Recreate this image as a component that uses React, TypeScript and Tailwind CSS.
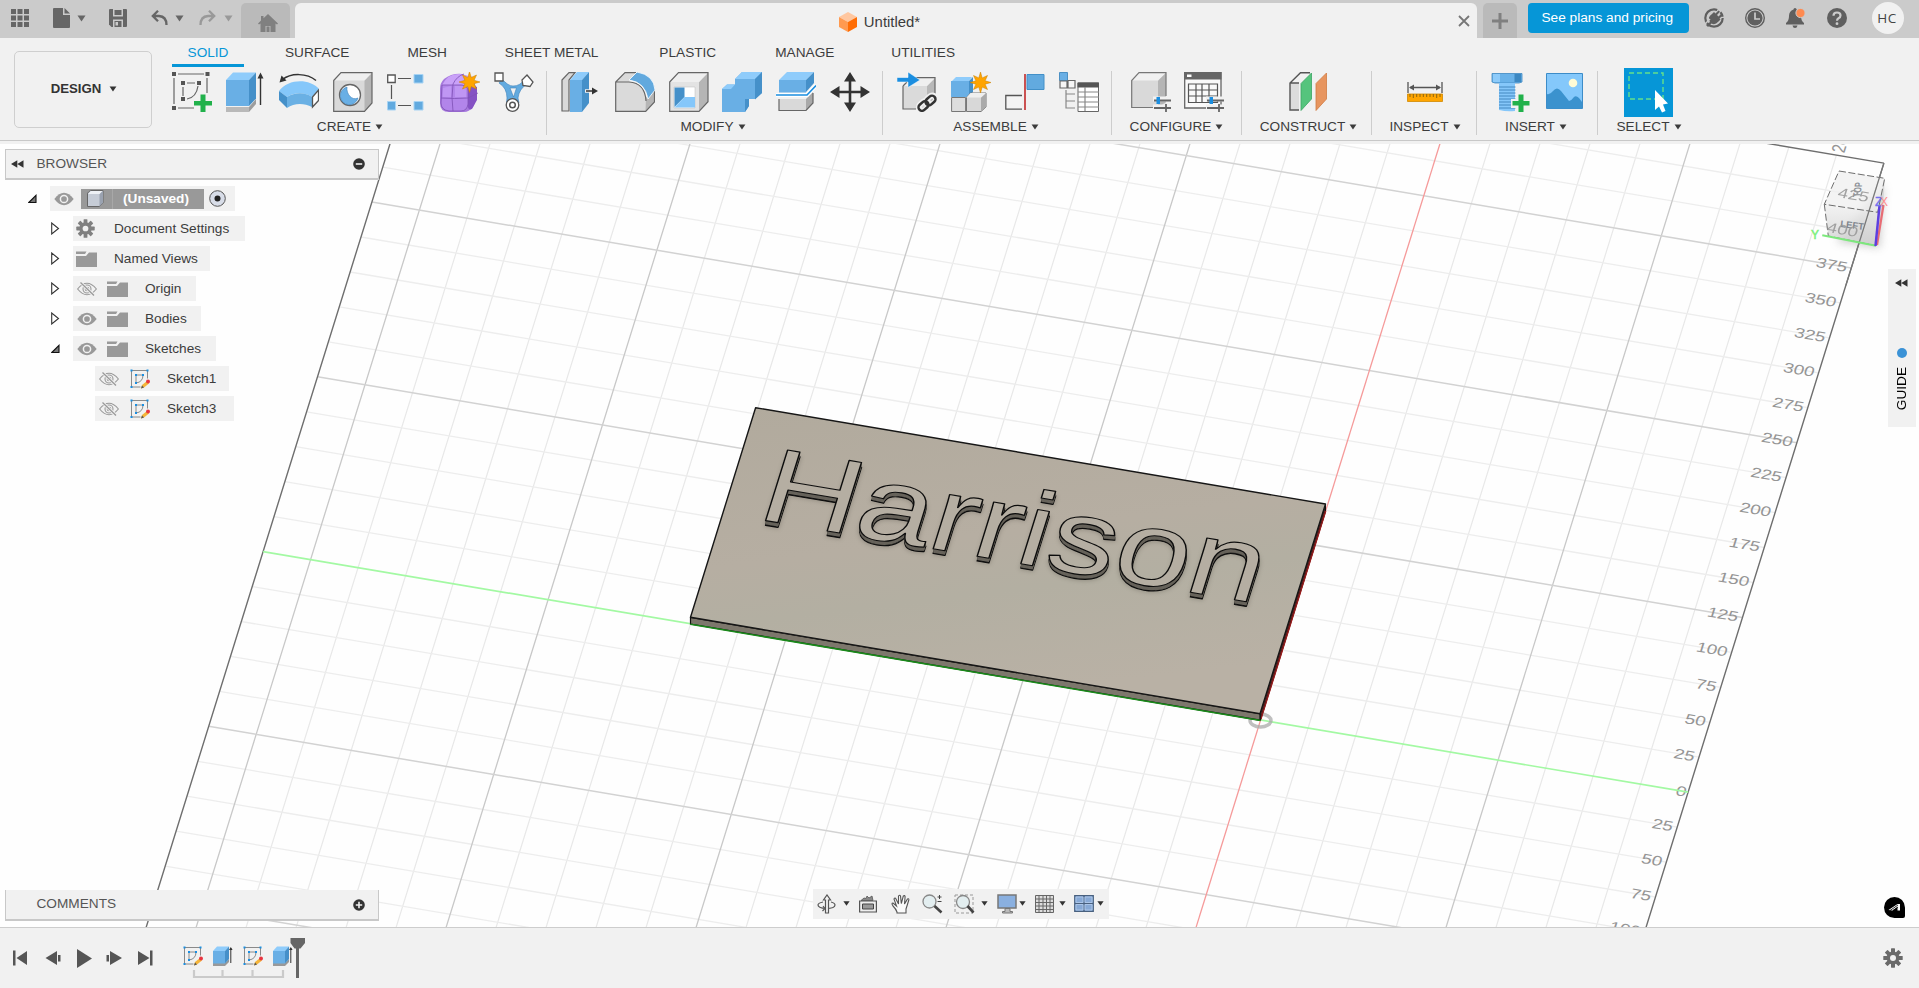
import type { ReactNode } from 'react';

type P = { children?: ReactNode; className?: string };

const Icon40 = ({ children }: P) => (
  <svg width="40" height="40" viewBox="0 0 40 40" className="block shrink-0">{children}</svg>
);

const Caret = ({ className = '' }: P) => (
  <svg width="9" height="7" viewBox="0 0 9 7" className={'block shrink-0 ' + className}>
    <path d="M0.5 0.5h8L4.5 6.5z" fill="currentColor" />
  </svg>
);

const Star = ({ x, y }: { x: number; y: number }) => (
  <path
    transform={`translate(${x} ${y})`}
    d="M0-10.5 1.700-4.600 7-7 4.600-1.700 10.5 0 4.600 1.700 7 7 1.700 4.600 0 10.5-1.700 4.600-7 7-4.600 1.700-10.5 0-4.600-1.700-7-7-1.700-4.600z"
    fill="#ffa400" stroke="#c98100" strokeWidth=".5"
  />
);

/* ---------- ribbon icons ---------- */
const SketchNew = () => (
  <Icon40>
    <g fill="none" stroke="#666" strokeWidth="1.2">
      <path d="M2 6v26M6 2h26M35 6v15M6 36h16M11 15v9M15 11h8M26 14c-1 7-5 12-11 13" />
    </g>
    <g fill="#555"><path d="M0 0h4v4H0zM33.500 0h4v4h-4zM0 34h4v4H0zM9 9h4v4H9zM25 9h4v4h-4zM9 25h4v4H9z" /></g>
    <path d="M28.500 22.500h5v6.500h6.500v4.500h-6.500v6.500h-5v-6.500H22V29h6.500z" fill="#21b14b" />
  </Icon40>
);
const Extrude = () => (
  <Icon40>
    <path d="M0 35h23l7-8v5l-7 8H0z" fill="#9d9d9d" /><path d="M0 35h23v5H0z" fill="#b9b9b9" />
    <path d="M0 8 7 0.500h23L23 8z" fill="#8fccfb" />
    <path d="M0 8h23v26H0z" fill="#69afe5" /><path d="M23 8 30 .5v26L23 34z" fill="#4590c9" />
    <path d="M34.500 33V3" stroke="#333" strokeWidth="1.400" /><path d="M31.500 6.500 34.500 .5l3 6z" fill="#333" />
  </Icon40>
);
const Revolve = () => (
  <Icon40>
    <path d="M0 19C9 7 30 6 40 17l-7 8C26 20 15 20 8 25z" fill="#85c7fa" />
    <path d="M8 25c8-5 18-5 25 0v10c-8-4-18-4-25 1z" fill="#6ab0e4" />
    <path d="M0 19 8 25v11L0 28z" fill="#4590c9" />
    <path d="m33.500 25 6-7v10.500l-6 6.500z" fill="#fff" stroke="#555" strokeWidth="1.300" />
    <path d="M3 8C12 .5 28 1 37 8.500" fill="none" stroke="#333" strokeWidth="1.500" /><path d="M.5 10.500 2.500 3.500l5 5z" fill="#333" />
  </Icon40>
);
const Hole = () => (
  <Icon40>
    <path d="M.7 8.500 8 .7h31V31l-7.500 8.300H.7z" fill="#d9d9d9" />
    <path d="M31.500 8.500 39 .7V31l-7.500 8z" fill="#b5b5b5" /><path d="M.7 8.500 8 .7h31l-7.500 7.800z" fill="#efefef" />
    <path d="M.7 8.500 8 .7h31V31l-7.500 8.300H.7z" fill="none" stroke="#666" strokeWidth="1.200" />
    <circle cx="17" cy="23" r="10.500" fill="#fff" stroke="#666" strokeWidth="1.300" />
    <path d="M14 15a9 9 0 1 0 11 11c-6 3-12-4-11-11z" fill="#69afe5" stroke="#3c82ba" strokeWidth=".6" />
  </Icon40>
);
const Pattern = () => (
  <Icon40>
    <path d="M11 6.500h13M4.500 13v14M11 33.500h13" stroke="#555" strokeWidth="1.200" />
    <path d="M.7 3h7.500v7.500H.7z" fill="#fff" stroke="#555" strokeWidth="1.300" />
    <path d="M27 2.500h9v8.500h-9zM.5 29.500h8V38h-8zM27 29.500h9V38h-9z" fill="#62aadf" stroke="#a8d4f4" />
  </Icon40>
);
const Form = () => (
  <Icon40>
    <path d="M4 7Q12 1 22 2q12 3 15 16-1 12-4 17-4 5-9 5H9q-9 0-9-9V17Q0 11 4 7z" fill="#a679dd" />
    <path d="M2 13Q8 1 20 2l13 3-5 9z" fill="#c9a1f8" /><path d="M28 15q4-3 9 0v13l-5 9q-5 2-4-6z" fill="#8552c4" />
    <path d="M2 13h22q4 0 4 5v15q-1 5-6 6H9q-7-1-8-8z" fill="#b285ea" />
    <path d="M2 13h20q6 1 6 6v13q-1 7-7 7H9q-8-1-8-8zM1 26q14 1 27 0l10-5M13 12q-2 14 0 27M13 12Q17 4 24 2" fill="none" stroke="#7d50b5" strokeWidth=".8" />
    <path d="M3 16v9h8V14zM15 14v11h11v-7q0-4-4-4z" fill="#cfaaff" opacity=".45" />
    <Star x={29.500} y={10} />
  </Icon40>
);
const Pipe = () => (
  <Icon40>
    <path d="M8 7q6 7 11 7 7 0 11-6l3 4q-8 5-9 14l1 5H12.500l.5-5Q13 16 5 11z" fill="#62aadf" stroke="#3c82ba" strokeWidth=".6" />
    <path d="M16 16h6.500l-3 9z" fill="#f1f1f1" stroke="#3c82ba" strokeWidth=".6" />
    <path d="M1 1h8v8H1z" fill="#fff" stroke="#555" strokeWidth="1.300" /><path d="m33 3 6 7-3 4.500-7-1-1-5.500z" fill="#fff" stroke="#555" strokeWidth="1.300" />
    <circle cx="18.500" cy="33" r="6.300" fill="#fff" stroke="#555" strokeWidth="1.300" /><circle cx="18.500" cy="33" r="2.800" fill="none" stroke="#555" strokeWidth="1.500" />
  </Icon40>
);
const PressPull = () => (
  <Icon40>
    <path d="M1 8 8 .7h6L8 8v31H1z" fill="#d9d9d9" stroke="#666" strokeWidth="1.200" />
    <path d="m9 8 7-8h12l-7 8z" fill="#8fccfb" /><path d="M9 8h12v32H9z" fill="#69afe5" /><path d="m21 8 7-8v31l-7 9z" fill="#4590c9" />
    <path d="M24 19h9" stroke="#f1f1f1" strokeWidth="3.500" /><path d="M25 19h8" stroke="#333" strokeWidth="1.500" /><path d="m31 15.500 6 3.500-6 3.500z" fill="#333" />
  </Icon40>
);
const Fillet = () => (
  <Icon40>
    <path d="M.7 10 10 .7h11L14 10q16 2 17 20v9.300H.7z" fill="#dadada" /><path d="M31 26 39.500 16v14l-9 9.300z" fill="#b5b5b5" />
    <path d="M21 .7H10L.7 10v29.300h30L39.500 30V18M1 10h13q16 1 17 19" fill="none" stroke="#666" strokeWidth="1.200" />
    <path d="m14 8 8-8q17 3 18 18l-7 9Q30 10 14 8z" fill="#62a9de" stroke="#fff" strokeWidth=".8" />
  </Icon40>
);
const Shell = () => (
  <Icon40>
    <path d="M.7 10 9.500.7H39v29l-9 9.600H.7z" fill="#e3e3e3" /><path d="m30 10 9-9.300v29l-9 9.600z" fill="#b5b5b5" /><path d="M.7 10 9.500.7H39L30 10z" fill="#efefef" />
    <path d="M.7 10 9.500.7H39v29l-9 9.600H.7z" fill="none" stroke="#666" strokeWidth="1.200" />
    <path d="M5 15h21v21H5z" fill="#fff" stroke="#bbb" strokeWidth=".5" /><path d="M5.500 15.500h10V25l-10 10z" fill="#4590c9" /><path d="M5.500 35.500 15.500 25H26v10.500z" fill="#85c7fa" />
  </Icon40>
);
const Combine = () => (
  <Icon40>
    <path d="m0 17 5-4.500h8V7L20 0h20v21l-7 6h-6v7l-4 6H0z" fill="#69afe5" />
    <path d="m13 7 7-7h20l-7 7zM0 17l5-4.500h8L9 17z" fill="#8fccfb" /><path d="m33 7 7-7v21l-7 6.500zM23 27h4v7l-4 6z" fill="#4590c9" />
  </Icon40>
);
const Split = () => (
  <Icon40>
    <path d="m3 8 8-8h27l-8 8z" fill="#8fccfb" /><path d="M3 8h27v12.500H3z" fill="#69afe5" /><path d="m30 8 8-8v11l-8 9z" fill="#4590c9" />
    <path d="M3 27h27v11.500H3z" fill="#d9d9d9" /><path d="m30 27 7-7v11l-7 7.500z" fill="#a9a9a9" /><path d="M3 27v11.500h27l7-7.500V21" fill="none" stroke="#666" strokeWidth="1.200" />
    <path d="M0 23h31l9-9.500" fill="none" stroke="#fff" strokeWidth="4" /><path d="M0 23h31l9-9.500" fill="none" stroke="#1b8ee0" strokeWidth="1.600" />
  </Icon40>
);
const Move = () => (
  <Icon40>
    <path d="M20 8v24M8 20h24" stroke="#333" strokeWidth="2.600" />
    <path d="m20 0 6 9.500H14zM20 40l6-9.500H14zM0 20l9.500-6v12zM40 20l-9.500-6v12z" fill="#333" />
  </Icon40>
);
const InsertLink = () => (
  <Icon40>
    <path d="m6 14 8-8h24v24l-8 7H6z" fill="#dadada" /><path d="m30 14 8-8v24l-8 7z" fill="#b8b8b8" /><path d="m6 14 8-8h24l-8 8z" fill="#efefef" />
    <path d="M6 14v23h13M14 5.700h24V26M6 14l4-4" fill="none" stroke="#666" strokeWidth="1.200" />
    <path d="M0 5.500h11V0l12 8-12 7.500V10H0z" fill="#1b8ee0" stroke="#fff" strokeWidth=".5" />
    <g fill="none" stroke="#f1f1f1" strokeWidth="6"><rect x="-5.500" y="-3.800" width="11" height="7.500" rx="3.700" transform="translate(27 34) rotate(-42)" /><rect x="-5.500" y="-3.800" width="11" height="7.500" rx="3.700" transform="translate(34 28.500) rotate(-42)" /></g>
    <g fill="none" stroke="#333" strokeWidth="2.500"><rect x="-5.500" y="-3.500" width="11" height="7" rx="3.500" transform="translate(26.500 34) rotate(-42)" /><rect x="-5.500" y="-3.500" width="11" height="7" rx="3.500" transform="translate(33.500 28.500) rotate(-42)" /></g>
  </Icon40>
);
const NewComponent = () => (
  <Icon40>
    <path d="m1 9 4-4h16l-3 4z" fill="#8fccfb" /><path d="M0 9h18v16H0z" fill="#69afe5" /><path d="m18 9 4-4v15l-4 4z" fill="#4590c9" />
    <path d="M.6 25.500h14v14H.6z" fill="#ddd" stroke="#777" /><path d="m15.500 25.500 4-4.500H35v14l-5 4.500H15.500z" fill="#d8d8d8" stroke="#777" /><path d="m30 25.500 5-4.500v14l-5 4.500z" fill="#aaa" /><path d="m15.500 25.500 4-4.500H35l-5 4.500z" fill="#efefef" />
    <Star x={29.500} y={10.500} />
  </Icon40>
);
const Joint = () => (
  <Icon40>
    <path d="M17 23.500H.8v13.700H17" fill="#f4f4f4" stroke="#555" strokeWidth="1.300" /><path d="M20 2v36" stroke="#c22a2a" strokeWidth="1.600" />
    <path d="M22 2.500h17v15H22z" fill="#62aadf" stroke="#4290c8" />
  </Icon40>
);
const PartsTable = () => (
  <Icon40>
    <path d="M.5.500h8v8h-8z" fill="#69afe5" stroke="#4b90c4" /><path d="M1 9h7v7H1zM9 8.500h7V16H9z" fill="#f5f5f5" stroke="#666" strokeWidth="1.200" />
    <path d="M7 18v18h9M7 22h9M7 29h9" fill="none" stroke="#888" strokeWidth="1.200" />
    <path d="M19 11h20.500v28.500H19z" fill="#fff" stroke="#666" /><path d="M18.500 10.500H40v5H18.500z" fill="#555" />
    <path d="M19 20h21M19 25h21M19 30h21M19 35h21M26 15v24" stroke="#888" strokeWidth="1.200" />
  </Icon40>
);
const Sliders = () => (
  <g><path d="M22 27h18M22 35h18" stroke="#f1f1f1" strokeWidth="5" /><path d="M23 28.500h17M23 36h17M35 32v8" stroke="#666" strokeWidth="1.800" /><path d="M25.500 25h3.500v7h-3.500z" fill="#1b8ee0" /></g>
);
const Configure = () => (
  <Icon40>
    <path d="M.7 8.500 8 .7h27V31l-7 5H.7z" fill="#d9d9d9" /><path d="m27 8.500 8-8V30l-8 5.500z" fill="#b5b5b5" /><path d="M.7 8.500 8 .7h27l-8 7.800z" fill="#f1f1f1" />
    <path d="M22 35.500H.7v-27L8 .7h27V24" fill="none" stroke="#777" strokeWidth="1.200" /><Sliders />
  </Icon40>
);
const ConfigTable = () => (
  <Icon40>
    <path d="M.7.700H37V36H.7z" fill="#fafafa" stroke="#666" strokeWidth="1.300" /><path d="M0 0h37.500v7.500H0z" fill="#666" /><path d="M3 2.500h4.500v2.500H3z" fill="#fff" />
    <path d="M4.500 12h29v18.500h-29zM4.500 18h29M4.500 24h29M12 12v18.500M18 12v18.500M25 12v18.500" fill="none" stroke="#555" strokeWidth="1.200" /><Sliders />
  </Icon40>
);
const Planes = () => (
  <Icon40>
    <path d="M2 11h9v27H2z" fill="#dcdcdc" /><path d="M11 38H2V11L12.500.7H22M2 11h9" fill="none" stroke="#555" strokeWidth="1.400" />
    <path d="M13 11.500 23.500 1v26L13 38.500z" fill="#55c47d" stroke="#3aa562" strokeWidth=".8" /><path d="M28 11.500 38.500 1v26L28 38.500z" fill="#e7955f" stroke="#d07b42" strokeWidth=".8" />
  </Icon40>
);
const Measure = () => (
  <Icon40>
    <path d="M3 10v11M37 10v11M5 15.500h30" stroke="#555" strokeWidth="1.300" /><path d="m4 15.500 5-3v6zM36 15.500l-5-3v6z" fill="#555" />
    <path d="M2.500 22h35v7.500h-35z" fill="#ffa500" stroke="#d18800" strokeWidth=".8" /><path d="M5 22v3M8.300 22v4M11.700 22v3M15 22v3M18.300 22v3M21.700 22v3M25 22v3M28.300 22v3M31.700 22v4M35 22v3" stroke="#8a6510" />
  </Icon40>
);
const Bolt = () => (
  <Icon40>
    <path d="M1 1.500h30V10l-3 1H4l-3-1z" fill="#69b2e9" stroke="#3f88c0" strokeWidth=".8" /><path d="M2 2h7v8H2z" fill="#8dcbfa" /><path d="M23.500 2H30v8h-6.500z" fill="#3c88c2" />
    <path d="M8 11h16v28q-8 1-16-1z" fill="#85c7fa" /><path d="M8 15h16.500M8 18h16.500M8 21h16.500M8 24h16.500M8 27h16.500M8 30h16.500M8 33h16.500M8 36h16.500" stroke="#3c82ba" strokeWidth=".9" />
    <path d="M26.500 20.500h8v6.500H41v9h-6.500V41h-8v-5H20v-9h6.500z" fill="#f1f1f1" /><path d="M27.500 22.500h5v6.500h6v4.500h-6V40h-5v-6.500h-6V29h6z" fill="#21b14b" />
  </Icon40>
);
const Picture = () => (
  <Icon40>
    <path d="M1.500 1.500h36v35h-36z" fill="#84c8fb" stroke="#3c8cc8" /><circle cx="28" cy="11" r="4.300" fill="#fffbd5" />
    <path d="M2 22q3 1 6-3 4-5 8 0l8 10q3-1 5-4 2-2 5 1l3 4v6.500H2z" fill="#3b92ce" />
  </Icon40>
);
const Select = () => (
  <div className="mr-[2px] flex h-[49px] w-[49px] items-center justify-center bg-[#0696d7]">
    <svg width="49" height="49" viewBox="0 0 49 49">
      <path d="M5 5h34v26H5z" fill="none" stroke="#64e08c" strokeWidth="1.400" strokeDasharray="5 3" />
      <path d="M31 22v20l4-3.500 3 6 3.500-1.500-2.500-6.500 5-1z" fill="#fff" />
    </svg>
  </div>
);

/* ---------- small icons ---------- */
const Eye = ({ off = false }: { off?: boolean }) => (
  <svg width="20" height="14" viewBox="0 0 20 14" className="block shrink-0">
    {off ? (
      <g fill="none" stroke="#999" strokeWidth="1.100"><path d="M.6 7Q10-4.500 19.400 7 10 18.500.6 7z" /><circle cx="10" cy="7" r="4" /><circle cx="10" cy="7" r="1.800" /><path d="M3.500.5 17 13.500" stroke="#f1f1f1" strokeWidth="3" /><path d="M3.500.5 17 13.500" strokeWidth="1.300" /></g>
    ) : (
      <g><path d="M.3 7Q10-5.500 19.700 7 10 19.500.3 7z" fill="#999" /><circle cx="10" cy="7" r="3.600" fill="none" stroke="#f1f1f1" strokeWidth="1.500" /></g>
    )}
  </svg>
);
const Folder = () => (
  <svg width="21" height="16" viewBox="0 0 21 16" className="block shrink-0">
    <path d="M0 5h10l3-3.500h8V16H0z" fill="#999" /><path d="M0 .5h10.500L9 3H0z" fill="#999" />
  </svg>
);
const Gear = ({ size = 19, color = '#808080' }: { size?: number; color?: string }) => (
  <svg width={size} height={size} viewBox="-10 -10 20 20" className="block shrink-0">
    {[0, 45, 90, 135].map((a) => <rect key={a} x="-2" y="-9.700" width="4" height="19.400" rx=".6" fill={color} transform={`rotate(${a})`} />)}
    <circle r="6.500" fill={color} /><circle r="3" fill="#f1f1f1" />
  </svg>
);
const SketchSmall = () => (
  <svg width="20" height="20" viewBox="0 0 20 20" className="block shrink-0">
    <path d="M1.500 1.500h16v8M1.500 1.500v16.500h9M6 6v8M6 6h7q0 7-7 8" fill="none" stroke="#8a8a8a" strokeWidth="1" />
    <path d="M.5.500h2v2h-2zM16.500.500h2v2h-2zM.5 17h2v2h-2zM5 5h2v2H5zM12 5h2v2h-2zM5 13h2v2H5z" fill="#1b8ee0" />
    <path d="m11 19.500 1-3.500 5-4 2 2.500-5 4z" fill="#f5b53a" /><path d="m11 19.500 1-3 2 2z" fill="#555" /><circle cx="18" cy="12.500" r="2" fill="#e8353f" />
  </svg>
);
const ExtrudeSmall = () => (
  <svg width="20" height="20" viewBox="0 0 20 20" className="block shrink-0">
    <path d="M0 17h12l4-4v3l-4 4H0z" fill="#999" /><path d="m0 5 4-4.500h12L12 5z" fill="#8fccfb" /><path d="M0 5h12v12.500H0z" fill="#69afe5" /><path d="m12 5 4-4.500V13l-4 4.500z" fill="#4590c9" />
    <path d="M17.800 17V2" stroke="#333" strokeWidth="1" /><path d="M16 4 17.800 1l1.800 3z" fill="#333" />
  </svg>
);
const Twisty = ({ open }: { open?: boolean }) => (
  <svg width="10" height="13" viewBox="0 0 10 13" className="block shrink-0">
    {open ? <path d="M.8 10.500 8 3.300v7.200z" fill="#777" stroke="#111" strokeWidth="1.100" /> : <path d="M.7 1v11L7.500 6.500z" fill="#fff" stroke="#333" strokeWidth="1.100" />}
  </svg>
);
const Rewind = () => (
  <svg width="13" height="8" viewBox="0 0 13 8" className="block shrink-0"><path d="M0 4 6.300.3v7.400zM6.300 4l6.200-3.700v7.400z" fill="#333" /></svg>
);

/* ---------- ribbon ---------- */
const tabs: [string, string][] = [
  ['SURFACE', 'ml-[56px]'], ['MESH', 'ml-[58px]'], ['SHEET METAL', 'ml-[58px]'],
  ['PLASTIC', 'ml-[61px]'], ['MANAGE', 'ml-[59px]'], ['UTILITIES', 'ml-[57px]'],
];

const Panel = ({ label, w, nudge = '', children, last = false }: { label: string; w: string; nudge?: string; children: ReactNode; last?: boolean }) => (
  <div className={'flex h-[64px] shrink-0 flex-col items-center ' + w + (last ? '' : ' border-r-[1.5px] border-[#cdcdcd]')}>
    <div className="flex h-[42px] items-center gap-[13.700px] pl-[2px]">{children}</div>
    <div className={'mt-[6px] flex items-center gap-1 leading-4 text-[#3c3c3c] ' + nudge}>{label}<Caret className="h-[6px] w-[8px]" /></div>
  </div>
);

const Ribbon = () => (
  <div className="flex h-[103px] border-b border-[#c8c8c8] bg-[#f1f1f1]">
    <div className="flex w-[158px] shrink-0 pl-[14px] pt-[13px]">
      <button className="flex h-[77px] w-[138px] items-center justify-center gap-[8px] rounded-[5px] border-[1.5px] border-[#cfcfcf] pb-[2px] pl-[2px] text-[13.200px] font-bold text-[#333]">
        DESIGN <Caret className="h-[6px] w-[8px]" />
      </button>
    </div>
    <div className="flex flex-col">
      <div className="flex h-[33px] pl-[14px] text-[#3c3c3c]">
        <div className="flex h-[29px] w-[72px] items-center justify-center border-b-[3px] border-[#0696d7] pt-[4px] text-[#0696d7]">SOLID</div>
        <div className="-ml-[15px] flex h-[29px] items-center pt-px">
          {tabs.map(([t, m]) => <span key={t} className={'whitespace-nowrap ' + m}>{t}</span>)}
        </div>
      </div>
      <div className="flex">
        <Panel label="CREATE" w="w-[389px]" nudge="pr-[4px]"><SketchNew /><Extrude /><Revolve /><Hole /><Pattern /><Form /><Pipe /></Panel>
        <Panel label="MODIFY" w="w-[336px]" nudge="pr-[3px]"><PressPull /><Fillet /><Shell /><Combine /><Split /><Move /></Panel>
        <Panel label="ASSEMBLE" w="w-[229px]" nudge="pr-[2px]"><InsertLink /><NewComponent /><Joint /><PartsTable /></Panel>
        <Panel label="CONFIGURE" w="w-[130px]"><Configure /><ConfigTable /></Panel>
        <Panel label="CONSTRUCT" w="w-[130px]" nudge="pl-[4px]"><Planes /></Panel>
        <Panel label="INSPECT" w="w-[105px]" nudge="pl-[2px]"><Measure /></Panel>
        <Panel label="INSERT" w="w-[121px]" nudge="pr-[2px]"><Bolt /><Picture /></Panel>
        <Panel label="SELECT" w="w-[100px]" nudge="pl-[2px]" last><Select /></Panel>
      </div>
    </div>
  </div>
);

/* ---------- title bar ---------- */
const TitleBar = () => (
  <div className="flex h-[38px] bg-[#cbcbcb] text-[#666]">
    <div className="flex w-[241px] shrink-0 items-center pb-[2px] pl-[11px]">
      <svg width="18" height="18" viewBox="0 0 18 18" fill="currentColor"><path d="M0 0h5v5H0zM6.500 0h5v5h-5zM13 0h5v5h-5zM0 6.500h5v5H0zM6.500 6.500h5v5h-5zM13 6.500h5v5h-5zM0 13h5v5H0zM6.500 13h5v5h-5zM13 13h5v5h-5z" /></svg>
      <svg width="17" height="20" viewBox="0 0 17 20" className="ml-[24px]" fill="currentColor"><path d="M0 1q0-1 1-1h9v7h7v12q0 1-1 1H1q-1 0-1-1z" /><path d="M11.500 0 17 5.500h-5.500z" /></svg>
      <Caret className="ml-[7px]" />
      <svg width="18" height="18" viewBox="0 0 18 18" className="ml-[23px]"><path d="M0 1q0-1 1-1h16q1 0 1 1v16q0 1-1 1H2.500L0 15.500z" fill="#666" /><path d="M4 0h10v7.500H4z" fill="#cbcbcb" /><path d="M5.500 1h7v5h-7z" fill="#666" /><path d="M4 10.500h10V18H4z" fill="#cbcbcb" /><path d="M5.500 12h7v6h-7z" fill="#666" /><path d="M6.500 13h2.500v3.500H6.500z" fill="#cbcbcb" /></svg>
      <svg width="17" height="16" viewBox="0 0 17 16" className="ml-[24px]" fill="none" stroke="#666" strokeWidth="2.300"><path d="M7 .8 1.800 6 7 11.200M2 6h6q7.500.500 7.500 9" /></svg>
      <Caret className="ml-[7px]" />
      <svg width="17" height="16" viewBox="0 0 17 16" className="ml-[15px]" fill="none" stroke="#999" strokeWidth="2.300"><path d="m10 .8 5.200 5.200L10 11.200M15 6H9Q1.500 6.500 1.500 15" /></svg>
      <Caret className="ml-[8px] text-[#999]" />
    </div>
    <div className="mt-[3px] flex w-[49px] shrink-0 items-center justify-center rounded-t-[5px] bg-[#bababa] pl-[4px] pt-[4px]">
      <svg width="20" height="18" viewBox="0 0 20 18" fill="#808080"><path d="M10 0 20 9.500l-1 1L17.500 9.500V18h-5v-6h-5v6h-5V9.500L1 10.500l-1-1 3-3V2h2.500v2.300z" /><path d="M8.500 12.500h3V18h-3z" /></svg>
    </div>
    <div className="ml-[5px] mt-[3px] flex w-[1182px] shrink-0 items-center rounded-t-[6px] bg-[#f1f1f1]">
      <div className="flex w-[1168px] items-center justify-center gap-[7px] pl-[1px] pt-[3px]">
        <svg width="18" height="20" viewBox="0 0 18 20"><path d="M9 0l9 5-9 5-9-5z" fill="#ffc7a0" /><path d="M0 5l9 5v10l-9-5z" fill="#ff9a50" /><path d="M18 5l-9 5v10l9-5z" fill="#ff6d05" /></svg>
        <span className="text-[14.900px] text-[#3c3c3c]">Untitled*</span>
      </div>
    </div>
    <div className="-ml-[19px] flex w-[12px] shrink-0 items-center pt-[4px]">
      <svg width="12" height="12" viewBox="0 0 12 12" stroke="#777" strokeWidth="1.800"><path d="M1 1l10 10M11 1 1 11" /></svg>
    </div>
    <div className="ml-[13px] mt-[3px] flex w-[34px] shrink-0 items-center justify-center rounded-t-[5px] bg-[#bababa]">
      <svg width="16" height="16" viewBox="0 0 16 16" stroke="#808080" strokeWidth="3"><path d="M8 0v16M0 8h16" /></svg>
    </div>
    <div className="ml-[10.500px] mt-[3px] flex h-[30px] w-[161.500px] shrink-0 items-center justify-center rounded-[4px] bg-[#0696d7] pr-[2px] pt-px text-[13.700px] text-white">See plans and pricing</div>
    <div className="ml-[15px] flex items-center gap-[21px] pb-[2px]">
      <svg width="20" height="20" viewBox="0 0 20 20"><circle cx="10" cy="10" r="8.700" fill="none" stroke="#5f5f5f" strokeWidth="2.200" strokeDasharray="44 4 5 3" /><path d="M6 14q-3-5 2-8l2-2 1.500 1.500 3-3 1.500 1.300-3 3.200 1.500 1.500 3-3L19 7l-3.500 3.500 1 1-2 2q-3.500 4-7 2L4 19l-2-2z" fill="#5f5f5f" /><path d="M1 16 6 11" stroke="#cbcbcb" strokeWidth="1.500" /></svg>
      <svg width="20" height="20" viewBox="0 0 20 20"><circle cx="10" cy="10" r="9.300" fill="none" stroke="#5f5f5f" strokeWidth="1.400" /><circle cx="10" cy="10" r="7.600" fill="#5f5f5f" /><path d="M10 4.500V11h5" fill="none" stroke="#cbcbcb" strokeWidth="1.700" /></svg>
      <svg width="20" height="20" viewBox="0 0 20 20" className="overflow-visible"><path d="M9 0q1.500 0 1.500 1.500Q15 3 15 8q0 5 3 7v1.500H0V15q3-2 3-7 0-5 4.500-6.500Q7.500 0 9 0zM6.500 17.500h5q-.5 2.500-2.500 2.500t-2.500-2.500z" fill="#5f5f5f" /><circle cx="14.500" cy="5" r="4.600" fill="#ff8a50" stroke="#cbcbcb" /></svg>
      <svg width="20" height="20" viewBox="0 0 20 20" className="overflow-visible"><circle cx="10" cy="10" r="10" fill="#5f5f5f" /><path d="M6.500 7.800Q6.500 4.500 10 4.500T13.500 7.500q0 1.700-2 2.700-1.500.800-1.500 2.500" fill="none" stroke="#cbcbcb" strokeWidth="2.200" /><circle cx="10" cy="15.700" r="1.400" fill="#cbcbcb" /></svg>
    </div>
    <div className="ml-[25px] mt-[2px] flex h-8 w-8 items-center justify-center rounded-full bg-[#f1f1f1] pr-[2px] font-['Open_Sans',sans-serif] text-[13.500px] tracking-[0.500px] text-[#444]">HC</div>
  </div>
);

/* ---------- model canvas ---------- */
const O = { x: 1260.6, y: 576 };
const U = { x: 47.5, y: 8.02 };
const V = { x: 10.88, y: -34.95 };
const pt = (c: number, r: number) => [O.x + c * U.x + r * V.x, O.y + c * U.y + r * V.y];
const seg = (c1: number, r1: number, c2: number, r2: number) => {
  const a = pt(c1, r1), b = pt(c2, r2);
  return `M${a[0].toFixed(1)} ${a[1].toFixed(1)}L${b[0].toFixed(1)} ${b[1].toFixed(1)}`;
};
const range = (a: number, b: number) => Array.from({ length: b - a + 1 }, (_, i) => a + i);
const cols = range(-20, 8), rows = range(-14, 17);
const planeMatrix = (x: number, y: number, sx = 1, sy = 1) =>
  `matrix(${(U.x / 25) * sx} ${(U.y / 25) * sx} ${(-V.x / 25) * sy} ${(-V.y / 25) * sy} ${x} ${y})`;
const upMatrix = (x: number, y: number) => `matrix(${V.x / 25} ${V.y / 25} ${U.x / 25} ${U.y / 25} ${x} ${y})`;

const Name = ({ dy, fill, stroke, sw }: { dy: number; fill: string; stroke: string; sw: number }) => (
  <text transform={planeMatrix(754.8, 374.800 + dy, 0.995, 1.048)} fontSize="70" fill={fill} stroke={stroke} strokeWidth={sw} strokeLinejoin="round" aria-hidden={dy !== 0}>Harrison</text>
);

const RowLabel = ({ r }: { r: number }) => {
  const [x, y] = pt(9, r);
  return <text transform={planeMatrix(x, y)} x={r === 0 ? -0.8 : -2.2} y="3.400" fontSize="9.700" textAnchor="end">{Math.abs(r * 25)}</text>;
};

const Scene = () => (
  <svg width="1919" height="783" viewBox="0 0 1919 783" className="absolute inset-0 block font-['Liberation_Sans',sans-serif]">
    <defs>
      <linearGradient id="plate" x1="0" y1="0" x2=".25" y2="1">
        <stop offset="0" stopColor="#b1aa9d" /><stop offset=".5" stopColor="#b6aea2" /><stop offset=".68" stopColor="#b3afa2" /><stop offset="1" stopColor="#b9b1a5" />
      </linearGradient>
      <linearGradient id="cubeFront" x1="0" y1="0" x2="0" y2="1"><stop offset="0" stopColor="#f0f0f0" /><stop offset="1" stopColor="#cecece" /></linearGradient>
      <filter id="soft" x="-30%" y="-30%" width="160%" height="160%"><feGaussianBlur stdDeviation="4" /></filter>
      <filter id="glow" x="-5%" y="-5%" width="110%" height="110%"><feGaussianBlur stdDeviation="2" /></filter>
    </defs>
    <g fill="none">
      <path d={cols.filter((c) => c % 5).map((c) => seg(c, -14, c, 18)).join('')} stroke="#e8e8e8" strokeWidth="1.200" />
      <path d={rows.filter((r) => r % 5).map((r) => seg(-21, r, 9, r)).join('')} stroke="#ededed" strokeWidth="1.300" />
      <path d={cols.filter((c) => c % 5 === 0 && c).map((c) => seg(c, -14, c, 18)).join('')} stroke="#c8c8c8" strokeWidth="1.300" />
      <path d={rows.filter((r) => r % 5 === 0 && r).map((r) => seg(-21, r, 9, r)).join('')} stroke="#d2d2d2" strokeWidth="1.500" />
      <path d={seg(-21, -14, -21, 18) + seg(-21, 18, 9, 18) + seg(9, 18, 9, -14)} stroke="#6e6e6e" strokeWidth="1.400" />
    </g>
    <g fill="#959595">
      {range(-4, 15).map((r) => <RowLabel key={r} r={r} />)}
      <text transform={upMatrix(pt(8, 18)[0], pt(8, 18)[1])} x="2" y="3.600" fontSize="10">200</text>
    </g>
    <path d={seg(-21, 0, 9, 0)} stroke="#a3f9a3" strokeWidth="1.700" />
    <path d={seg(0, -14, 0, 18)} stroke="#f59a9a" strokeWidth="1.300" />
    <ellipse cx="1260.500" cy="576.500" rx="10.500" ry="6.500" fill="none" stroke="#aaa" strokeOpacity=".75" strokeWidth="3.500" />

    <path d="M1260 570l65.500-209.500v7L1260.500 576z" fill="#5a2020" stroke="#111" strokeWidth="1" />
    <path d="M1325.800 367 1261 575" stroke="#9b1c1c" strokeWidth="1.200" />
    <path d="M690.500 473.500 1260 569.700v6.500L690.500 480z" fill="#7d776c" stroke="#111" strokeWidth="1.200" />
    <path d="M690.500 480.300 1260.500 576.500" stroke="#1a8a1a" strokeWidth="1.500" />
    <path d="M755.600 263.700 1325.500 360 1260 569.700 690.500 473.300z" fill="url(#plate)" stroke="#161616" strokeWidth="1.400" strokeLinejoin="round" />

    <g filter="url(#glow)" opacity=".35"><Name dy={5} fill="#5c574e" stroke="#5c574e" sw={1.500} /></g>
    <Name dy={4.600} fill="#0c0c0c" stroke="#0c0c0c" sw={0.750} />
    {[3.800, 3, 2.200, 1.400, 0.700].map((d) => <Name key={d} dy={d} fill="#67635b" stroke="#67635b" sw={0.1} />)}
    <Name dy={0} fill="#b5aea2" stroke="#0c0c0c" sw={0.750} />

    <g>
      <path d="M1836 98l48-58-4 64z" fill="#777" opacity=".35" filter="url(#soft)" />
      <path d="M1839 27l45.700 7.300-7 34-53.400-8z" fill="#efefef" fillOpacity=".75" /><path d="M1824.300 60.300l53.400 8-1.700 33.400-47.700-9.700z" fill="url(#cubeFront)" fillOpacity=".8" />
      <path d="M1877.700 68.300l7-34-1.500 30-7.200 37.400z" fill="#d4d4d4" fillOpacity=".8" />
      <path d="M1839 27l45.700 7.300-7 34-53.400-8zM1824.300 60.300l4 31.700 47.700 9.700" fill="none" stroke="#6d6d6d" strokeWidth="1" strokeDasharray="7 2.500" />
      <path d={seg(9, 14.500, 9, 18)} stroke="#777" strokeWidth="1.200" />
      <path d="M1822.300 91.300l53.700 10.400" stroke="#7de87d" strokeWidth="2" /><path d="M1883.500 61l-6.500 40" stroke="#e86c74" strokeWidth="2.200" /><path d="M1879.500 62l-4 40" stroke="#5d3fe0" strokeWidth="2.500" />
      <text transform="translate(1860 53) rotate(-80) skewX(10)" fontSize="10.500" fontWeight="bold" fill="#8a8f96" textLength="15" lengthAdjust="spacingAndGlyphs">TOP</text>
      <text transform="translate(1840 83) rotate(7)" fontSize="9.500" fontWeight="bold" fill="#80868e">LEFT</text>
      <text x="1811" y="95" fontSize="12" fill="#7cf07c" stroke="#7cf07c" strokeWidth=".5">Y</text>
      <text x="1875" y="62" fontSize="12.500" fill="#7373ee" stroke="#7373ee" strokeWidth=".4">Z</text>
      <text x="1880" y="62" fontSize="12" fill="#ff8c8c">X</text>
      <g fill="#999" opacity=".9"><RowLabel r={16} /><RowLabel r={17} /></g>
    </g>
  </svg>
);

/* ---------- browser tree ---------- */
type Row = { label: string; indent: string; w: string; icon: 'gear' | 'folder' | 'sketch'; eye?: 'on' | 'off'; twisty?: 'open' | 'closed' };
const tree: Row[] = [
  { label: 'Document Settings', indent: 'pl-[51px]', w: 'w-[172px]', icon: 'gear', twisty: 'closed' },
  { label: 'Named Views', indent: 'pl-[51px]', w: 'w-[137px]', icon: 'folder', twisty: 'closed' },
  { label: 'Origin', indent: 'pl-[51px]', w: 'w-[123px]', icon: 'folder', eye: 'off', twisty: 'closed' },
  { label: 'Bodies', indent: 'pl-[51px]', w: 'w-[128px]', icon: 'folder', eye: 'on', twisty: 'closed' },
  { label: 'Sketches', indent: 'pl-[51px]', w: 'w-[143px]', icon: 'folder', eye: 'on', twisty: 'open' },
  { label: 'Sketch1', indent: 'pl-[73px]', w: 'w-[134px]', icon: 'sketch', eye: 'off' },
  { label: 'Sketch3', indent: 'pl-[73px]', w: 'w-[139px]', icon: 'sketch', eye: 'off' },
];

const Browser = () => (
  <div className="relative w-[380px] pt-[5px] text-[#3c3c3c]">
    <div className="ml-[5px] flex h-[31px] w-[374px] items-center border border-b-2 border-[#c8c8c8] bg-[#f1f1f1] pl-[5px]">
      <Rewind /><span className="ml-[12.500px] flex-1 text-[#555]">BROWSER</span>
      <svg width="12" height="12" viewBox="0 0 12 12" className="mr-[13px]"><circle cx="6" cy="6" r="5.800" fill="#333" /><path d="M2.800 6h6.400" stroke="#f1f1f1" strokeWidth="1.600" /></svg>
    </div>
    <div className="mt-[6px] flex h-[25px] items-center pl-[28px]">
      <Twisty open />
      <div className="ml-[12px] flex h-full w-[185px] items-center bg-[#f1f1f1] pl-[4px]">
        <Eye />
        <div className="ml-[7px] flex h-[20px] w-[123px] items-center bg-[#999] pl-[6px]">
          <svg width="17" height="17" viewBox="0 0 17 17"><path d="M.5 4q0-1 1-2L3.500.5H16v12L12.500 16.500H.5z" fill="#c6ccd6" stroke="#666" /><path d="M12.500 4 16 .5v12l-3.500 4z" fill="#9aa2b0" /><path d="M1 4 4 1h11.500l-3 3z" fill="#eef1f5" /></svg>
          <div className="ml-[8px] h-full w-px bg-[#a8a8a8]" />
          <span className="ml-[10px] pt-px font-bold text-white">(Unsaved)</span>
        </div>
        <svg width="17" height="17" viewBox="0 0 17 17" className="ml-[5px]"><circle cx="8.500" cy="8.500" r="7.800" fill="#d8dde8" stroke="#555" /><circle cx="8.500" cy="8.500" r="3" fill="#222" /></svg>
      </div>
    </div>
    {tree.map((r) => (
      <div key={r.label} className={'mt-[5px] flex h-[25px] items-center ' + r.indent}>
        {r.twisty ? <Twisty open={r.twisty === 'open'} /> : <span className="w-[10px]" />}
        <div className={'ml-[12px] flex h-full items-center bg-[#f1f1f1] pl-[3px] ' + r.w}>
          {r.eye && <div className="flex w-[31px] shrink-0 pl-[0.500px]"><Eye off={r.eye === 'off'} /></div>}
          <div className="flex w-[38px] shrink-0">
            {r.icon === 'gear' ? <Gear /> : r.icon === 'folder' ? <Folder /> : <div className="pl-[1px]"><SketchSmall /></div>}
          </div>
          <span className="whitespace-nowrap pt-px">{r.label}</span>
        </div>
      </div>
    ))}
  </div>
);

/* ---------- view navigation bar ---------- */
const NavBar = () => (
  <div className="absolute left-[813px] top-[745px] flex h-[30px] w-[296px] items-center bg-[#f1f1f1] pb-px pl-[4px] text-[#333]">
    <svg width="20" height="20" viewBox="0 0 20 20" fill="none" stroke="#555" strokeWidth="1.200"><path d="M6 8q-5 1-5 3 0 3 8 3.500 9 0 9-3.500 0-2-4-3M6 12l2 2.500L5.500 17" /><path d="M8.500 19V6H6.500L10 1l3.500 5h-2v13z" fill="#f4f4f4" /></svg>
    <Caret className="ml-[6px] w-[7px]" />
    <svg width="18" height="18" viewBox="0 0 18 18" className="ml-[9px]"><path d="M.6 6h16.800v11H.6z" fill="#eee" stroke="#555" strokeWidth="1.200" /><path d="M3.500 9h11v5h-11z" fill="#999" stroke="#444" /><path d="M2 5.500 5 3l2 .5L8 1l2 2 3-2 1 4.500z" fill="#888" stroke="#555" strokeWidth=".8" /></svg>
    <svg width="20" height="20" viewBox="0 0 20 20" className="ml-[14px]"><path d="M6 18q-1-3-4-6-2-3 0-3l3.500 3L3 5q1-2 2 0l2.500 5L7.500 2q1.300-1.500 2 0l.8 7.500 2-7.500q1.500-1 1.800.5L13.500 10l3-5q1.700-.7 1.300 1-1.800 6-2.800 9v4H6z" fill="#fafafa" stroke="#555" strokeWidth="1.100" /></svg>
    <svg width="21" height="20" viewBox="0 0 21 20" className="ml-[11px]"><circle cx="7.500" cy="7.500" r="6.500" fill="#e3eef0" stroke="#888" strokeWidth="1.300" /><path d="m12.500 12 7 6.500" stroke="#444" strokeWidth="2.600" /><path d="M15.500 3h4M17.500 1v4M15.500 7.500h4" stroke="#444" strokeWidth="1" /></svg>
    <svg width="21" height="20" viewBox="0 0 21 20" className="ml-[11px]"><path d="M1 1h18v18H1z" fill="none" stroke="#999" strokeDasharray="3 2" /><circle cx="9" cy="8" r="6.500" fill="#e3eef0" stroke="#888" strokeWidth="1.300" /><path d="m13.500 12 6 6.500" stroke="#444" strokeWidth="2.600" /></svg>
    <Caret className="ml-[6px] w-[7px]" />
    <svg width="20" height="20" viewBox="0 0 20 20" className="ml-[9px]"><path d="M1 1h18v13H1z" fill="#8ab0e0" stroke="#777" strokeWidth="1.500" /><path d="M8 14.500h5v3h2.500V19H5.500v-1.500H8z" fill="#bbb" stroke="#777" /></svg>
    <Caret className="ml-[2px] w-[7px]" />
    <svg width="19" height="18" viewBox="0 0 19 18" className="ml-[9px]"><path d="M.5.500h18v17H.5z" fill="#ddd" /><path d="M.5.500h18v17H.5zM.5 4h18M.5 7.500h18M.5 11h18M.5 14.500h18M4 .5v17M8 .5v17M11.500.5v17M15 .5v17" fill="none" stroke="#666" /></svg>
    <Caret className="ml-[5px] w-[7px]" />
    <svg width="20" height="17" viewBox="0 0 20 17" className="ml-[8px]"><path d="M.7.700h18.600v15.600H.7z" fill="#87a9d6" stroke="#49617f" strokeWidth="1.200" /><path d="M10 1v15M1 8.500h18" stroke="#49617f" strokeWidth="1.200" /><path d="M2 2h7v5.500H2zM11 2h7v5.500h-7zM2 9.500h7V15H2zM11 9.500h7V15h-7z" fill="none" stroke="#b5cdec" strokeWidth=".8" /></svg>
    <Caret className="ml-[3px] w-[7px]" />
  </div>
);

const Timeline = () => (
  <div className="flex h-[61px] shrink-0 border-t border-[#cdcdcd] bg-[#f1f1f1]">
    <div className="flex h-[60px] items-center pl-[13px]">
      <svg width="15" height="16" viewBox="0 0 15 16" fill="#555"><path d="M0 .5h2.500v15H0zM14 1v14L3.500 8z" /></svg>
      <svg width="16" height="16" viewBox="0 0 16 16" fill="#555" className="ml-[17px]"><path d="M12 1v14L.5 8zM13 5h2.500v6.500H13z" /></svg>
      <svg width="15" height="19" viewBox="0 0 15 19" fill="#555" className="ml-[16px]"><path d="M0 0v19L15 9.500z" /></svg>
      <svg width="16" height="16" viewBox="0 0 16 16" fill="#555" className="ml-[14px]"><path d="M4 1v14L16 8zM.5 5H3v6.500H.5z" /></svg>
      <svg width="15" height="16" viewBox="0 0 15 16" fill="#555" className="ml-[16px]"><path d="M12 .5h2.500v15H12zM0 1v14l11.500-7z" /></svg>
    </div>
    <div className="relative ml-[30px] mt-[18px] w-[125px]">
      <div className="flex gap-[10px]"><SketchSmall /><ExtrudeSmall /><SketchSmall /><ExtrudeSmall /></div>
      <svg width="125" height="42" viewBox="0 0 125 42" className="absolute -top-[8px] left-0">
        <path d="M11 32v7h89v-7M39.500 32v7M69.500 32v7" fill="none" stroke="#cacaca" strokeWidth="2.200" />
        <path d="M107.500 0h14.500v5l-4.500 5.500h-1.500V40h-3V10.500h-1.500L107.500 5z" fill="#666" />
      </svg>
    </div>
    <div className="ml-auto flex h-[60px] items-center pb-px pr-[16px]"><Gear size={20} color="#6a6a6a" /></div>
  </div>
);

export default function App() {
  return (
    <div className="flex h-[988px] w-[1919px] flex-col overflow-hidden bg-[#f1f1f1] font-['Liberation_Sans',Arial,sans-serif] text-[13.650px]">
      <TitleBar />
      <Ribbon />
      <div className="h-[3px] shrink-0 bg-[#f1f1f1]" />
      <main className="relative flex h-[783px] shrink-0 flex-col justify-between overflow-hidden bg-[#fefefe]">
        <Scene />
        <Browser />
        <div className="relative mb-[6px] ml-[5px] flex h-[31px] w-[374px] items-center border border-b-2 border-t-0 border-[#c8c8c8] bg-[#f1f1f1] pl-[30.500px] text-[#555]">
          <span className="flex-1">COMMENTS</span>
          <svg width="12" height="12" viewBox="0 0 12 12" className="mr-[13px]"><circle cx="6" cy="6" r="5.800" fill="#333" /><path d="M2.800 6h6.400M6 2.800v6.400" stroke="#f1f1f1" strokeWidth="1.600" /></svg>
        </div>
        <NavBar />
        <div className="absolute right-[3px] top-[125px] flex h-[158px] w-[28px] flex-col items-center bg-[#f1f1f1] pr-[2px] pt-[10px]">
          <Rewind />
          <div className="ml-[2px] mt-[61px] h-[10px] w-[10px] rounded-full bg-[#3b92d6]" />
          <span className="ml-[2px] mt-[9px] rotate-180 text-[13.650px] leading-[18px] text-black [writing-mode:vertical-rl]">GUIDE</span>
        </div>
        <svg width="21" height="21" viewBox="0 0 21 21" className="absolute right-[14px] top-[753px]">
          <path d="M10.500 0A10.500 10.500 0 0 1 21 10.500V19q0 2-2 2h-8.500a10.500 10.500 0 0 1 0-21z" fill="#000" />
          <path d="m4.500 13 9-6h2.500v6.500h-2.500V10l-5 3.500z" fill="#fff" /><path d="m6 13.500 8-5.500M9 13.500l5-3.500" stroke="#000" strokeWidth=".8" />
        </svg>
      </main>
      <Timeline />
    </div>
  );
}
